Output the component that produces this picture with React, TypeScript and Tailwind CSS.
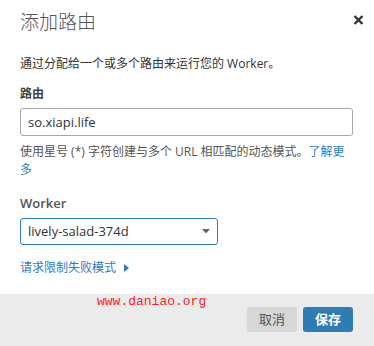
import React from "react";

const font = {
  fontFamily: '"Open Sans", "Noto Sans CJK SC", sans-serif',
};

export default function App() {
  return (
    <div
      className="relative flex h-[346px] w-[374px] flex-col bg-white text-[#333]"
      style={font}
    >
      <div className="flex flex-1 flex-col px-5">
        <div className="flex items-start justify-between pt-[9px]">
          <h2 className="text-[19px] leading-[26px] font-light text-[#555]">
            添加路由
          </h2>
          <button className="mt-[3px] -mr-[12px] flex h-4 w-4 items-center justify-center text-[#333]">
            <svg width="11" height="10" viewBox="0 0 11 10">
              <path
                d="M1.5 1L9.5 9M9.5 1L1.5 9"
                stroke="currentColor"
                strokeWidth="2.4"
              />
            </svg>
          </button>
        </div>

        <p className="mt-[20px] text-[12px] leading-[18px] text-[#333]">
          通过分配给一个或多个路由来运行您的 Worker。
        </p>

        <label className="mt-[12px] text-[12px] leading-[18px] font-bold text-[#444]">
          路由
        </label>
        <input
          className="mt-[5px] h-[28px] w-[333px] rounded-[3px] border border-[#a8a8a8] px-[7px] text-[13px] text-[#333] outline-none"
          defaultValue="so.xiapi.life"
        />
        <p className="mt-[7px] w-[333px] text-[12px] leading-[18px] text-[#555]">
          使用星号 (*) 字符创建与多个 URL 相匹配的动态模式。
          <a className="text-[#2f7bbf]">了解更多</a>
        </p>

        <label className="mt-[15px] text-[13px] leading-[18px] font-semibold text-[#555]">
          Worker
        </label>
        <div className="mt-[6px] flex h-[27px] w-[198px] items-center justify-between rounded-[3px] border border-[#2f7bbf] pr-[7px] pl-[7px]">
          <span className="text-[13px] text-[#333]">lively-salad-374d</span>
          <svg width="8" height="5" viewBox="0 0 8 5">
            <path d="M0 0H8L4 4.5Z" fill="#666" />
          </svg>
        </div>

        <a className="mt-[14px] flex items-center gap-[8px] text-[12px] leading-[18px] text-[#2f7bbf]">
          请求限制失败模式
          <svg width="5" height="8" viewBox="0 0 5 8">
            <path d="M0 0L5 4L0 8Z" fill="#2f7bbf" />
          </svg>
        </a>
      </div>

      <div className="flex h-[52px] items-start justify-end gap-[6px] bg-[#eaebeb] pt-[13px] pr-[21px]">
        <button className="h-[25px] w-[50px] rounded-[3px] bg-[#d5d7d8] text-[13px] text-[#555]">
          取消
        </button>
        <button className="h-[25px] w-[50px] rounded-[3px] bg-[#2f7bb4] text-[13px] font-bold text-white">
          保存
        </button>
      </div>

      <span
        className="absolute top-[295px] left-[97px] text-[13px] leading-[13px] text-[#ff1a1a]"
        style={{ fontFamily: '"Liberation Mono", monospace' }}
      >
        www.daniao.org
      </span>
    </div>
  );
}
